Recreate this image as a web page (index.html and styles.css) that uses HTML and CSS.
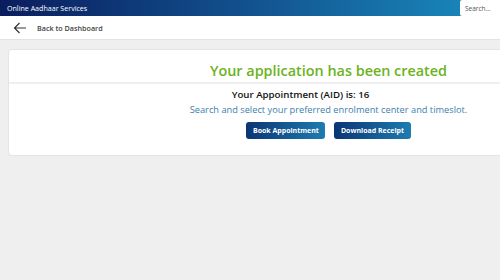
FILE: index.html
```html
<!doctype html>
<html lang="en">
  <head>
    <meta charset="UTF-8" />
    <title>Online Aadhaar Services</title>
    <link rel="stylesheet" href="styles.css">
  </head>
  <body>
    <div class="top-bar">
      <span class="top-title">Online Aadhaar Services</span>
      <input class="top-search" type="text" placeholder="Search..." />
    </div>

    <div class="back-bar">
      <svg class="back-arrow" width="14" height="12" viewBox="0 0 14 12">
        <path d="M13 6H1.5M6.5 1L1.5 6l5 5" fill="none" stroke="#333" stroke-width="1.2" />
      </svg>
      <span class="back-text">Back to Dashboard</span>
    </div>

    <div class="page">
      <div class="result-card">
        <h2 class="result-heading">Your application has been created</h2>
        <div class="result-body">
          <p class="result-aid">Your Appointment (AID) is: 16</p>
          <p class="result-note">Search and select your preferred enrolment center and timeslot.</p>
          <div class="result-actions">
            <button class="action-btn">Book Appointment</button>
            <button class="action-btn">Download Receipt</button>
          </div>
        </div>
      </div>
    </div>
  </body>
</html>
```

FILE: styles.css
```css
:root {
  --navy: #0b2466;
  --teal: #1a8dbf;
  --green: #6cb31c;
  --note-blue: #3b7fad;
  --page-bg: #efefef;
}

* {
  box-sizing: border-box;
  font-family: "Open Sans", sans-serif;
}

body {
  margin: 0;
  background: var(--page-bg);
}

.top-bar {
  height: 16px;
  display: flex;
  align-items: center;
  justify-content: space-between;
  background: linear-gradient(90deg, #0a1d5e 0%, #12528f 50%, #1a8dbf 100%);
}

.top-title {
  color: #fff;
  font-size: 7.1px;
  padding-left: 7px;
}

.top-search {
  width: 40px;
  height: 16px;
  border: none;
  border-radius: 2px 0 0 2px;
  padding: 0 5px;
  font-size: 6.5px;
  outline: none;
}

.top-search::placeholder {
  color: #555;
}

.back-bar {
  height: 24px;
  display: flex;
  align-items: center;
  background: #fff;
  border-bottom: 1px solid #e2e2e2;
  padding-left: 13px;
}

.back-arrow {
  margin-right: 10px;
}

.back-text {
  font-size: 7.2px;
  font-weight: 600;
  color: #444;
}

.page {
  padding: 9px 0 0 8px;
}

.result-card {
  height: 107px;
  background: #fff;
  border: 1px solid #e4e4e4;
  border-right: none;
  border-radius: 4px 0 0 4px;
}

.result-heading {
  margin: 0;
  height: 34px;
  line-height: 42px;
  padding-left: 148px;
  text-align: center;
  color: var(--green);
  font-size: 14.4px;
  font-weight: 600;
  border-bottom: 2px solid #efefef;
}

.result-body {
  text-align: center;
  padding: 4px 0 0 148px;
}

.result-aid {
  margin: 0;
  font-size: 9.7px;
  font-weight: 600;
  color: #111;
  padding-right: 56px;
}

.result-note {
  margin: 2px 0 0;
  font-size: 9.25px;
  color: var(--note-blue);
}

.result-actions {
  margin-top: 6px;
  display: flex;
  justify-content: center;
  gap: 9px;
}

.action-btn {
  height: 17px;
  padding: 0 6.5px;
  border: none;
  border-radius: 3px;
  background: linear-gradient(90deg, #0b3574 0%, #1d7cb0 100%);
  color: #fff;
  font-size: 7px;
  font-weight: 700;
}
```
